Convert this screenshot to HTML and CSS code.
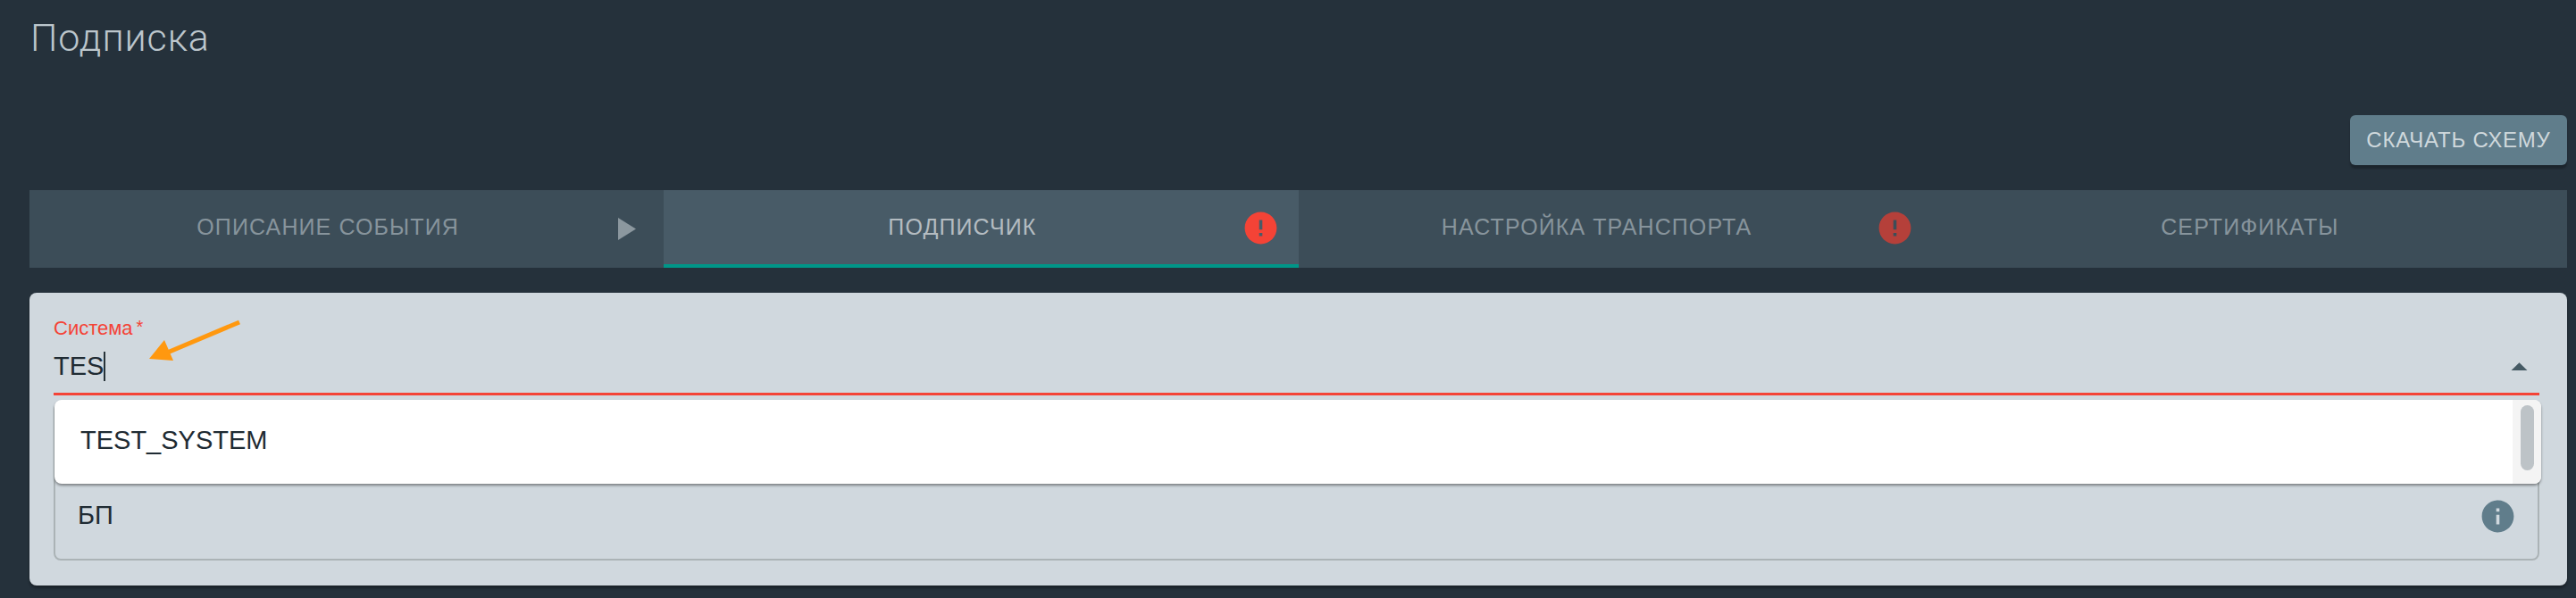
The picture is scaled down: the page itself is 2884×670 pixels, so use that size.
FILE: index.html
```html
<!DOCTYPE html>
<html lang="en">

<head>
    <meta charset="UTF-8">
    <meta name="viewport" content="width=device-width, initial-scale=1.0">
    <title>Подписка</title>
    <link rel="stylesheet" href="styles.css">
</head>

<body>
    <h2 class="page-title">Подписка</h2>

    <div class="toolbar">
        <button type="button" class="btn-schema">Скачать схему</button>
    </div>

    <div class="tabs">
        <div class="tab tab-icon">
            <span>Описание события</span>
            <svg class="tab-arrow" viewBox="0 0 20 25"><path d="M0 0l20 12.5L0 25z" /></svg>
        </div>
        <div class="tab tab-icon active">
            <span>Подписчик</span>
            <svg class="tab-error" viewBox="0 0 24 24"><path d="M12 2C6.48 2 2 6.48 2 12s4.48 10 10 10 10-4.48 10-10S17.52 2 12 2zm1 15h-2v-2h2v2zm0-4h-2V7h2v6z" /></svg>
        </div>
        <div class="tab tab-icon">
            <span>Настройка транспорта</span>
            <svg class="tab-error" viewBox="0 0 24 24"><path d="M12 2C6.48 2 2 6.48 2 12s4.48 10 10 10 10-4.48 10-10S17.52 2 12 2zm1 15h-2v-2h2v2zm0-4h-2V7h2v6z" /></svg>
        </div>
        <div class="tab">
            <span>Сертификаты</span>
        </div>
    </div>

    <div class="card">
        <div class="field">
            <label class="field-label">Система<span class="req">*</span></label>
            <div class="field-input">
                <span class="field-value">TES</span><span class="caret"></span>
                <svg class="field-toggle" viewBox="0 0 24 24"><path d="M7 14l5-5 5 5z" /></svg>
            </div>
            <div class="menu">
                <div class="menu-item">TEST_SYSTEM</div>
                <div class="menu-scroll"><div class="menu-thumb"></div></div>
            </div>
        </div>

        <div class="outlined">
            <span>БП</span>
            <svg class="info" viewBox="0 0 24 24"><path d="M12 2C6.48 2 2 6.48 2 12s4.48 10 10 10 10-4.48 10-10S17.52 2 12 2zm1 15h-2v-6h2v6zm0-8h-2V7h2v2z" /></svg>
        </div>
    </div>

    <!-- annotation arrow drawn over the screenshot -->
    <svg class="annotation" viewBox="0 0 120 60">
        <path d="M108 5L25 40" />
        <polygon points="7,46 24,25 34,48" />
    </svg>
</body>

</html>
```

FILE: styles.css
```css
body {
    font-family: "Liberation Sans", Arial, sans-serif;
    background-color: #25313b;
    margin: 0;
    padding: 0 10px 0 33px;
    height: 670px;
    box-sizing: border-box;
    overflow: hidden;
    position: relative;
}

.page-title {
    font-family: Roboto, "Liberation Sans", sans-serif;
    font-size: 43px;
    font-weight: 300;
    letter-spacing: 0.9px;
    line-height: 48px;
    color: #bcc6cc;
    margin: 0;
    padding: 18px 0 0 1px;
}

.toolbar {
    display: flex;
    justify-content: flex-end;
    margin-top: 63px;
}

.btn-schema {
    font-family: "Liberation Sans", Arial, sans-serif;
    font-size: 24px;
    letter-spacing: 0.8px;
    text-transform: uppercase;
    color: #cfd8dc;
    background-color: #607d8b;
    border: none;
    border-radius: 6px;
    width: 243px;
    height: 56px;
    padding: 0;
    box-shadow: 0 4px 2px rgba(0, 0, 0, 0.25);
}

.tabs {
    display: grid;
    grid-template-columns: repeat(4, 1fr);
    margin-top: 28px;
    height: 87px;
    background-color: #3c4d58;
}

.tab {
    position: relative;
    display: flex;
    align-items: center;
    justify-content: center;
    box-sizing: border-box;
    font-size: 25px;
    letter-spacing: 1.1px;
    text-transform: uppercase;
    color: #87949c;
    border-bottom: 4px solid transparent;
}

.tab-icon {
    padding-right: 42px;
}

.tab.active {
    background-color: #485b67;
    color: #b4bcc1;
    border-bottom-color: #009688;
}

.tab-arrow {
    position: absolute;
    right: 31px;
    top: 31px;
    width: 20px;
    height: 25px;
    fill: #8c989f;
}

.tab-error {
    position: absolute;
    right: 21px;
    top: 21px;
    width: 43px;
    height: 43px;
    fill: #b5403a;
}

.active .tab-error {
    fill: #f44336;
}

.card {
    margin-top: 28px;
    height: 328px;
    box-sizing: border-box;
    padding: 24px 31px 0 27px;
    background-color: #d0d8de;
    border-radius: 8px;
    box-shadow: 0 3px 3px rgba(0, 0, 0, 0.3);
}

.field {
    position: relative;
}

.field-label {
    display: block;
    font-size: 22px;
    line-height: 28px;
    color: #f44336;
}

.req {
    font-size: 20px;
    margin-left: 4px;
    vertical-align: 2px;
}

.field-input {
    position: relative;
    display: flex;
    align-items: center;
    height: 61px;
    box-sizing: border-box;
    border-bottom: 3px solid #f44336;
    font-size: 29px;
    color: #1f2b33;
    padding-bottom: 1px;
}

.caret {
    width: 2px;
    height: 33px;
    background-color: #263238;
}

.field-toggle {
    position: absolute;
    right: 1px;
    top: 8px;
    width: 43px;
    height: 43px;
    fill: #455a64;
}

.menu {
    position: absolute;
    left: 1px;
    right: -2px;
    top: 96px;
    height: 94px;
    display: flex;
    background-color: #fff;
    border-radius: 8px;
    box-shadow: 0 2px 3px rgba(0, 0, 0, 0.4);
    overflow: hidden;
    z-index: 2;
}

.menu-item {
    flex: 1;
    padding: 25px 0 0 29px;
    font-size: 29px;
    line-height: 40px;
    color: #1f2b33;
}

.menu-scroll {
    width: 32px;
    box-sizing: border-box;
    padding: 6px 8px 0 9px;
    background-color: #f4f4f4;
}

.menu-thumb {
    height: 73px;
    background-color: #bdc3c7;
    border-radius: 8px;
}

.outlined {
    display: flex;
    justify-content: space-between;
    margin-top: 8px;
    height: 177px;
    box-sizing: border-box;
    padding: 107px 23px 0 25px;
    border: 2px solid #abb3b6;
    border-radius: 8px;
    font-size: 29px;
    line-height: 34px;
    color: #1f2b33;
}

.info {
    width: 43px;
    height: 43px;
    margin-top: -3px;
    fill: #607d8b;
}

.annotation {
    position: absolute;
    left: 160px;
    top: 356px;
    width: 120px;
    height: 60px;
}

.annotation path {
    fill: none;
    stroke: #ff980f;
    stroke-width: 5px;
}

.annotation polygon {
    fill: #ff980f;
}
```
